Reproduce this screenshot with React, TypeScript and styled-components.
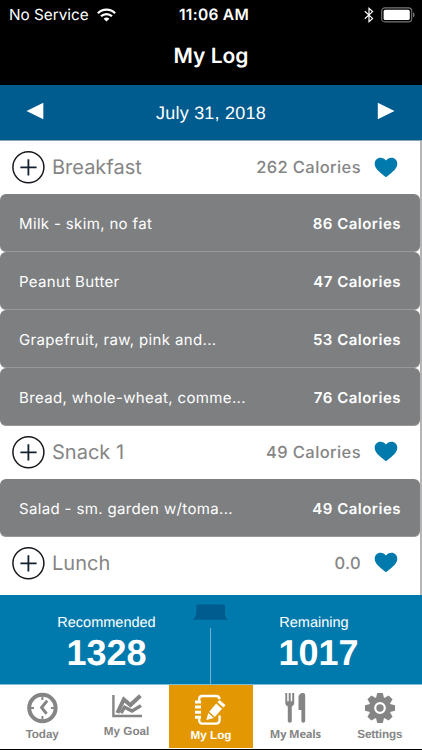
import React from 'react';
import styled, { createGlobalStyle } from 'styled-components';

interface IFood {
  name: string;
  calories: string;
}

interface IMeal {
  title: string;
  total: string;
  foods: IFood[];
}

const meals: IMeal[] = [
  {
    title: 'Breakfast',
    total: '262 Calories',
    foods: [
      { name: 'Milk - skim, no fat', calories: '86 Calories' },
      { name: 'Peanut Butter', calories: '47 Calories' },
      { name: 'Grapefruit, raw, pink and...', calories: '53 Calories' },
      { name: 'Bread, whole-wheat, comme...', calories: '76 Calories' },
    ],
  },
  {
    title: 'Snack 1',
    total: '49 Calories',
    foods: [{ name: 'Salad - sm. garden w/toma...', calories: '49 Calories' }],
  },
  { title: 'Lunch', total: '0.0', foods: [] },
];

function WifiIcon() {
  return (
    <svg width="19" height="14" viewBox="0 0 19 14" fill="none" stroke="#fff" strokeWidth="2.3">
      <path d="M0.9 5.2C5.6 0.5 13.4 0.5 18.1 5.2" />
      <path d="M4 8.3C7 5.3 12 5.3 15 8.3" />
      <path d="M9.5 13.6L6.6 10.7C8.2 9.2 10.8 9.2 12.4 10.7Z" fill="#fff" stroke="none" />
    </svg>
  );
}

function BluetoothIcon() {
  return (
    <svg width="10" height="16" viewBox="0 0 10 16" fill="none" stroke="#fff" strokeWidth="1.2">
      <path d="M0.8 4.3L8.6 11.4L5 14.6V1.4L8.6 4.6L0.8 11.7" />
    </svg>
  );
}

function BatteryIcon() {
  return (
    <svg width="34" height="16" viewBox="0 0 34 16">
      <rect x="0.7" y="0.9" width="30" height="14" rx="3.2" fill="none" stroke="#777" strokeWidth="1.1" />
      <rect x="2.6" y="2.8" width="26.2" height="10.2" rx="1.6" fill="#fff" />
      <path d="M32 5.5C34 6 34 9.8 32 10.3Z" fill="#777" />
    </svg>
  );
}

function AddIcon() {
  return (
    <svg width="34" height="34" viewBox="0 0 34 34" fill="none">
      <circle cx="17.4" cy="17.2" r="15.5" stroke="#16181d" strokeWidth="1.5" />
      <path d="M9.4 17.4H25.6M17.4 9.3V25.5" stroke="#13202f" strokeWidth="1.8" />
    </svg>
  );
}

function HeartIcon() {
  return (
    <svg width="24" height="21" viewBox="0 0 24 21">
      <path
        d="M12 20.3C8 16.6 0.7 12.6 0.7 6.7C0.7 3.2 3.3 0.8 6.4 0.8C8.8 0.8 10.9 2 12 3.6C13.1 2 15.2 0.8 17.6 0.8C20.7 0.8 23.3 3.2 23.3 6.7C23.3 12.6 16 16.6 12 20.3Z"
        fill="#007aad"
      />
    </svg>
  );
}

function ClockIcon() {
  return (
    <svg width="32" height="32" viewBox="0 0 32 32" fill="none" stroke="#858585">
      <circle cx="16.4" cy="16" r="13.2" strokeWidth="4" />
      <path d="M16.4 4.5V8M16.4 24V27.5M4.9 16H8M24.9 16H27.9" strokeWidth="2" />
      <path d="M21.2 8.6L15.6 15.6L20.6 21.8" strokeWidth="3" />
    </svg>
  );
}

function GoalIcon() {
  return (
    <svg width="32" height="26" viewBox="0 0 32 26" fill="none" stroke="#858585">
      <path d="M2.4 1V22H31" strokeWidth="2.4" />
      <path d="M6.4 19L12.8 5.4L19.4 11L29.4 1.8" strokeWidth="4" />
      <path d="M10 19L13.6 13.2L21 17L30 11.6" strokeWidth="3.4" />
    </svg>
  );
}

function LogIcon() {
  return (
    <svg width="34" height="32" viewBox="0 0 34 32" fill="none" stroke="#fff">
      <path d="M5.2 7V4.8C5.2 2.8 6.6 2 8.4 2H22C24.2 2 25.4 3 25.4 5.2M25.6 21.5V26C25.6 28.4 24.4 29.6 22 29.6H8.4C6.4 29.6 5.2 28.6 5.2 26.6V25" strokeWidth="2.3" />
      <path d="M1 8H7M1 13.1H7M1 18.2H7M1 23.3H7" strokeWidth="3" />
      <path d="M12.3 26L14.3 19L19.8 24Z M15.2 17.7L22.2 9.5L28 14.7L20.8 22.9Z M23.4 8.1L25.5 6L31.6 11.2L29.4 13.4Z" fill="#fff" stroke="none" />
    </svg>
  );
}

function MealsIcon() {
  return (
    <svg width="22" height="32" viewBox="0 0 22 32" fill="#858585">
      <path d="M1.3 1H3.2V9.3H4.7V1H6.7V9.3H8.2V1H10.2V11C10.2 13 8.9 13.8 7.8 14.4V29C7.8 31.3 3.8 31.3 3.8 29V14.4C2.7 13.8 1.3 13 1.3 11Z" />
      <path d="M14.5 6C14.5 2.4 16.5 1 19 1C20.8 1 21.2 2 21.2 3.5V29C21.2 31.3 17.4 31.3 17.4 29V18H14.5Z" />
    </svg>
  );
}

function GearIcon() {
  return (
    <svg width="32" height="32" viewBox="0 0 32 32" fill="none">
      <g fill="#858585">
        {[0, 45, 90, 135].map((angle) => (
          <path
            key={angle}
            d="M13.2 1H18.8L20 6V26L18.8 31H13.2L12 26V6Z"
            transform={`rotate(${angle} 16 16)`}
          />
        ))}
        <circle cx="16" cy="16" r="11" />
      </g>
      <circle cx="16" cy="16" r="4.8" stroke="#fff" strokeWidth="2.2" />
    </svg>
  );
}

const tabs = [
  { label: 'Today', icon: <ClockIcon />, top: 7, gap: 2, spacing: -0.1 },
  { label: 'My Goal', icon: <GoalIcon />, top: 9, gap: 3, spacing: 0 },
  { label: 'My Log', icon: <LogIcon />, top: 8.5, gap: 1.5, spacing: 0, active: true },
  { label: 'My Meals', icon: <MealsIcon />, top: 7, gap: 2, spacing: -0.2, humanist: true },
  { label: 'Settings', icon: <GearIcon />, top: 7, gap: 2, spacing: -0.15 },
];

export default function App() {
  return (
    <Screen>
      <GlobalStyle />
      <StatusBar>
        <Carrier>
          No Service
          <WifiIcon />
        </Carrier>
        <Time>11:06 AM</Time>
        <StatusIcons>
          <BluetoothIcon />
          <BatteryIcon />
        </StatusIcons>
      </StatusBar>
      <Header>My Log</Header>
      <DateBar>
        <ArrowButton aria-label="Previous day">
          <svg width="18" height="18" viewBox="0 0 18 18" fill="#fff">
            <path d="M0.5 9L17.3 0.8V17.2Z" />
          </svg>
        </ArrowButton>
        <DateText>July 31, 2018</DateText>
        <ArrowButton aria-label="Next day">
          <svg width="18" height="18" viewBox="0 0 18 18" fill="#fff">
            <path d="M17.5 9L0.8 0.8V17.2Z" />
          </svg>
        </ArrowButton>
      </DateBar>

      <MealList>
        {meals.map((meal) => (
          <React.Fragment key={meal.title}>
            <MealHeader>
              <AddIcon />
              <MealTitle>{meal.title}</MealTitle>
              <MealTotal>{meal.total}</MealTotal>
              <HeartIcon />
            </MealHeader>
            {meal.foods.map((food) => (
              <FoodRow key={food.name}>
                <FoodName>{food.name}</FoodName>
                <FoodCalories>{food.calories}</FoodCalories>
              </FoodRow>
            ))}
          </React.Fragment>
        ))}
      </MealList>

      <Summary>
        <SummaryItem>
          <SummaryLabel>Recommended</SummaryLabel>
          <SummaryValue>1328</SummaryValue>
        </SummaryItem>
        <Divider>
          <svg width="38" height="17" viewBox="0 0 38 17">
            <path d="M5.5 0.5H31C32.5 0.5 33 1.5 33 3V9C33 12.5 34.5 15.8 37.5 15.8H0.5C3.5 14 4.5 10.5 4.5 7V1.5Z" fill="#005b8f" />
          </svg>
          <DividerLine />
        </Divider>
        <SummaryItem>
          <SummaryLabel>Remaining</SummaryLabel>
          <SummaryValue $indent={9}>1017</SummaryValue>
        </SummaryItem>
      </Summary>

      <TabBar>
        {tabs.map((tab) => (
          <Tab key={tab.label} $active={tab.active} $top={tab.top} $gap={tab.gap}>
            {tab.icon}
            <TabLabel $humanist={tab.humanist} $spacing={tab.spacing}>
              {tab.label}
            </TabLabel>
          </Tab>
        ))}
      </TabBar>
    </Screen>
  );
}

const GlobalStyle = createGlobalStyle`
  * {
    box-sizing: border-box;
  }

  body {
    margin: 0;
    background: #000;
    text-rendering: geometricPrecision;
  }

  svg {
    display: block;
    flex-shrink: 0;
  }
`;

const Screen = styled.div`
  display: flex;
  flex-direction: column;

  width: 422px;
  height: 750px;

  overflow: hidden;

  font-family: Inter, 'Liberation Sans', sans-serif;
  background: #000;
`;

const StatusBar = styled.div`
  display: grid;
  grid-template-columns: 1fr auto 1fr;
  align-items: center;

  height: 29px;
  padding: 0 7px 0 9px;

  color: #fff;
  line-height: 28px;
`;

const Carrier = styled.div`
  display: flex;
  align-items: center;
  gap: 8px;

  font-size: 15.3px;
`;

const Time = styled.div`
  padding-left: 4px;

  font-size: 15.5px;
  font-weight: 600;
  letter-spacing: 0.3px;
`;

const StatusIcons = styled.div`
  display: flex;
  align-items: center;
  justify-content: flex-end;
  gap: 7px;
`;

const Header = styled.h1`
  margin: 0;

  height: 56px;

  color: #fff;
  font-size: 21px;
  font-weight: 600;
  line-height: 56px;
  text-align: center;
`;

const DateBar = styled.div`
  display: flex;
  align-items: center;
  justify-content: space-between;

  height: 56px;
  padding: 0 27px 0 26px;

  background: #005b8f;
  border-bottom: 1px solid #8aa3b3;
`;

const ArrowButton = styled.button`
  all: unset;

  padding-bottom: 4px;
`;

const DateText = styled.div`
  padding: 2px 0 0 1px;

  font-family: 'Liberation Sans', sans-serif;
  font-size: 18px;
  letter-spacing: 0.22px;
  color: #fff;
`;

const MealList = styled.main`
  height: 454px;

  background: #fff;
  border-right: 2px solid #b4b4b4;
`;

const MealHeader = styled.div`
  display: flex;
  align-items: center;

  height: 53px;
  padding: 0 22px 2px 11px;

  color: #858585;

  &:first-child {
    padding-bottom: 1px;
  }
`;

const MealTitle = styled.h2`
  margin: 0 auto 0 7px;

  font-size: 20px;
  font-weight: 400;
`;

const MealTotal = styled.span`
  margin-right: 13px;

  font-size: 16.5px;
  font-weight: 500;
  letter-spacing: 0.4px;
`;

const FoodRow = styled.div`
  display: flex;
  align-items: center;
  justify-content: space-between;

  height: 58px;
  padding: 2px 19px 0 19px;

  color: #fff;
  background: #7d7f81;
  border-bottom: 1px solid #97999b;
  border-radius: 6px;
`;

const FoodName = styled.span`
  font-size: 15px;
  letter-spacing: 0.35px;
`;

const FoodCalories = styled.span`
  font-size: 15px;
  font-weight: 600;
  letter-spacing: 0.5px;
`;

const Summary = styled.section`
  display: grid;
  grid-template-columns: 1fr 38px 1fr;

  height: 89px;

  color: #fff;
  font-family: 'Liberation Sans', sans-serif;
  background: #007aad;
`;

const SummaryItem = styled.div`
  display: flex;
  flex-direction: column;
  align-items: center;

  padding: 19px 0 0 21px;

  & + div + & {
    padding: 19px 24px 0 0;
  }
`;

const SummaryLabel = styled.div`
  font-size: 14.5px;
  line-height: 18px;
`;

const SummaryValue = styled.div<{ $indent?: number }>`
  padding-left: ${({ $indent = 0 }) => $indent}px;

  font-size: 36px;
  font-weight: 700;
  line-height: 41px;
`;

const Divider = styled.div`
  display: flex;
  flex-direction: column;
  align-items: center;

  padding-top: 9px;
`;

const DividerLine = styled.div`
  flex: 1;

  width: 1px;
  margin: 7px 1px 0 0;

  background: #6db3d3;
`;

const TabBar = styled.nav`
  display: grid;
  grid-template-columns: repeat(5, 1fr);

  height: 65px;
  padding-bottom: 1.5px;

  background: #fff;
  border-top: 1px solid #80bcd7;
`;

const Tab = styled.div<{ $active?: boolean; $top: number; $gap: number }>`
  display: flex;
  flex-direction: column;
  align-items: center;
  gap: ${({ $gap }) => $gap}px;

  padding-top: ${({ $top }) => $top}px;

  color: ${({ $active }) => ($active ? '#fff' : '#858585')};
  background: ${({ $active }) => ($active ? '#e39803' : 'transparent')};
`;

const TabLabel = styled.span<{ $humanist?: boolean; $spacing: number }>`
  font-family: ${({ $humanist }) => ($humanist ? "'Open Sans'" : "'Liberation Sans'")}, sans-serif;
  font-size: ${({ $humanist }) => ($humanist ? 11.2 : 11.7)}px;
  font-weight: 700;
  line-height: 17px;
  letter-spacing: ${({ $spacing }) => $spacing}px;
`;
